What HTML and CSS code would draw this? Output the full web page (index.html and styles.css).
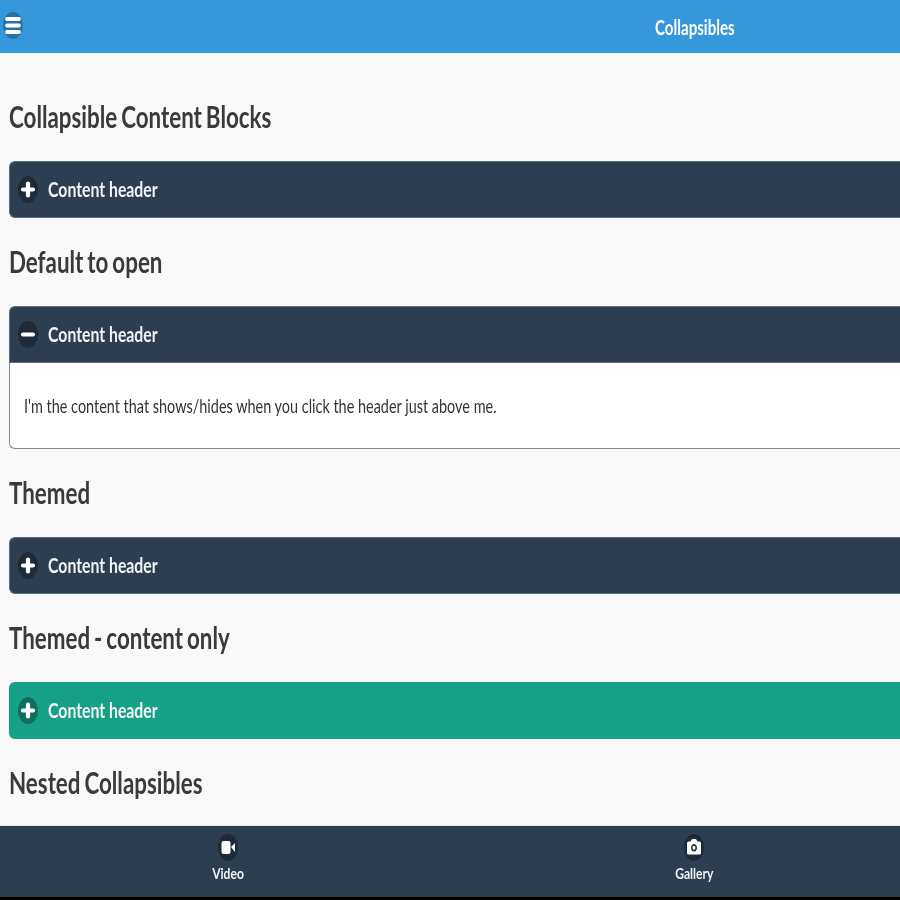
FILE: index.html
```html
<!DOCTYPE html>
<html lang="en">
<head>
<meta charset="utf-8">
<title>Collapsibles</title>
<link rel="stylesheet" href="styles.css">
</head>
<body>
<div class="app">
  <header class="topbar">
    <span class="menu-btn">
      <svg class="icon" viewBox="0 0 20 27"><ellipse cx="10" cy="13.500" rx="10" ry="13.500" fill="#000" fill-opacity=".25"/><path d="M4 7h12M4 13.500h12M4 20h12" stroke="#fff" stroke-width="3.800" stroke-linecap="round" fill="none"/></svg>
    </span>
    <h1 class="title"><span class="sq sq-c">Collapsibles</span></h1>
  </header>
  <main class="content">
    <h2 class="heading"><span class="sq">Collapsible Content Blocks</span></h2>
    <section class="block">
      <div class="block-head">
        <svg class="icon" viewBox="0 0 20 27"><ellipse cx="10" cy="13.500" rx="10" ry="13.500" fill="#000" fill-opacity=".3"/><path d="M5 13.500h10M10 7.500v12" stroke="#fff" stroke-width="4.200" stroke-linecap="round" fill="none"/></svg>
        <span class="sq head-text">Content header</span>
      </div>
    </section>
    <h2 class="heading"><span class="sq">Default to open</span></h2>
    <section class="block">
      <div class="block-head">
        <svg class="icon" viewBox="0 0 20 27"><ellipse cx="10" cy="13.500" rx="10" ry="13.500" fill="#000" fill-opacity=".3"/><path d="M5 13.500h10" stroke="#fff" stroke-width="4.200" stroke-linecap="round" fill="none"/></svg>
        <span class="sq head-text">Content header</span>
      </div>
      <div class="block-body"><p class="body-text"><span class="sq">I'm the content that shows/hides when you click the header just above me.</span></p></div>
    </section>
    <h2 class="heading"><span class="sq">Themed</span></h2>
    <section class="block">
      <div class="block-head">
        <svg class="icon" viewBox="0 0 20 27"><ellipse cx="10" cy="13.500" rx="10" ry="13.500" fill="#000" fill-opacity=".3"/><path d="M5 13.500h10M10 7.500v12" stroke="#fff" stroke-width="4.200" stroke-linecap="round" fill="none"/></svg>
        <span class="sq head-text">Content header</span>
      </div>
    </section>
    <h2 class="heading"><span class="sq">Themed - content only</span></h2>
    <section class="block">
      <div class="block-head green">
        <svg class="icon" viewBox="0 0 20 27"><ellipse cx="10" cy="13.500" rx="10" ry="13.500" fill="#000" fill-opacity=".3"/><path d="M5 13.500h10M10 7.500v12" stroke="#fff" stroke-width="4.200" stroke-linecap="round" fill="none"/></svg>
        <span class="sq head-text">Content header</span>
      </div>
    </section>
    <h2 class="heading"><span class="sq">Nested Collapsibles</span></h2>
  </main>
  <footer class="tabbar">
    <a class="tab">
      <svg class="icon" viewBox="0 0 20 27"><ellipse cx="10" cy="13.500" rx="10" ry="13.500" fill="#000" fill-opacity=".3"/><rect x="3.500" y="7" width="9" height="13" rx="2" fill="#fff"/><path d="M13 13l4-4v9z" fill="#fff"/></svg>
      <span class="sq sq-c tab-text">Video</span>
    </a>
    <a class="tab">
      <svg class="icon" viewBox="0 0 20 27"><ellipse cx="10" cy="13.500" rx="10" ry="13.500" fill="#000" fill-opacity=".3"/><path fill-rule="evenodd" fill="#fff" d="M4.500 7.500h2l1.500-2.500h4l1.500 2.500h2a1.500 1.500 0 0 1 1.500 1.500v10a1.500 1.500 0 0 1-1.500 1.500h-11a1.500 1.500 0 0 1-1.500-1.500v-10a1.500 1.500 0 0 1 1.500-1.500zM10 10a3 3.800 0 1 0 .01 0zM10 11.800a1.500 2 0 1 1-.01 0z"/></svg>
      <span class="sq sq-c tab-text">Gallery</span>
    </a>
  </footer>
</div>
</body>
</html>
```
FILE: styles.css
```css
html, body {
  margin: 0;
  padding: 0;
  background: #f9f9f9;
}
body {
  width: 900px;
  height: 900px;
  overflow: hidden;
  font-family: Lato, "Liberation Sans", sans-serif;
}
.app {
  width: 1390px;
  height: 900px;
  display: flex;
  flex-direction: column;
  filter: blur(0.5px);
}
.sq {
  display: inline-block;
  white-space: nowrap;
  transform: scaleX(0.753);
  transform-origin: left center;
}
.sq-c {
  transform-origin: center center;
}
.icon {
  width: 20px;
  height: 27px;
  flex: none;
  display: block;
}
.topbar {
  height: 53px;
  flex: none;
  background: #3498db;
  position: relative;
  display: flex;
  align-items: center;
  justify-content: center;
  box-sizing: border-box;
}
.menu-btn {
  position: absolute;
  left: 3px;
  top: 12px;
}
.title {
  margin: 0;
  font-size: 20px;
  font-weight: 700;
  color: #fff;
  line-height: 1;
}
.content {
  flex: 1;
  padding: 46px 0 0 9px;
  overflow: hidden;
}
.heading {
  margin: 0 0 28px;
  height: 34px;
  line-height: 34px;
  font-size: 30px;
  font-weight: 700;
  color: #3a3a3a;
  word-spacing: -2px;
}
.heading .sq {
  transform: scaleX(0.745);
}
.block {
  margin-bottom: 26px;
}
.block-head {
  height: 57px;
  box-sizing: border-box;
  background: #2c3e50;
  border-radius: 6px 0 0 6px;
  border: 1px solid #5e6d7c;
  border-right: 0;
  display: flex;
  align-items: center;
  padding-left: 8px;
  gap: 10px;
  color: #f2f4f6;
}
.block-head:has(+ .block-body) {
  border-radius: 6px 0 0 0;
}
.green {
  background: #16a085;
  border-color: #16a085;
}
.head-text {
  font-size: 21px;
  font-weight: 700;
  padding-bottom: 2px;
}
.block-body {
  height: 86px;
  box-sizing: border-box;
  background: #fff;
  border: 1px solid #7d8a97;
  border-top: 0;
  border-right: 0;
  border-radius: 0 0 0 6px;
  display: flex;
  align-items: center;
  padding-left: 14px;
}
.body-text {
  margin: 0;
  font-size: 19px;
  color: #333;
}
.body-text .sq {
  transform: scaleX(0.76);
}
.tabbar {
  height: 72px;
  flex: none;
  margin-bottom: 3px;
  background: #2c3e50;
  display: grid;
  grid-template-columns: 456px 476px;
  box-shadow: 0 3px 0 #000;
  border-top: 1px solid #e6e8ea;
  box-sizing: border-box;
}
.tab {
  display: flex;
  flex-direction: column;
  align-items: center;
  justify-content: flex-start;
  gap: 2px;
  padding-top: 8px;
  color: #f2f4f6;
}
.tab-text {
  font-size: 16px;
  font-weight: 700;
  line-height: 20px;
}
```
